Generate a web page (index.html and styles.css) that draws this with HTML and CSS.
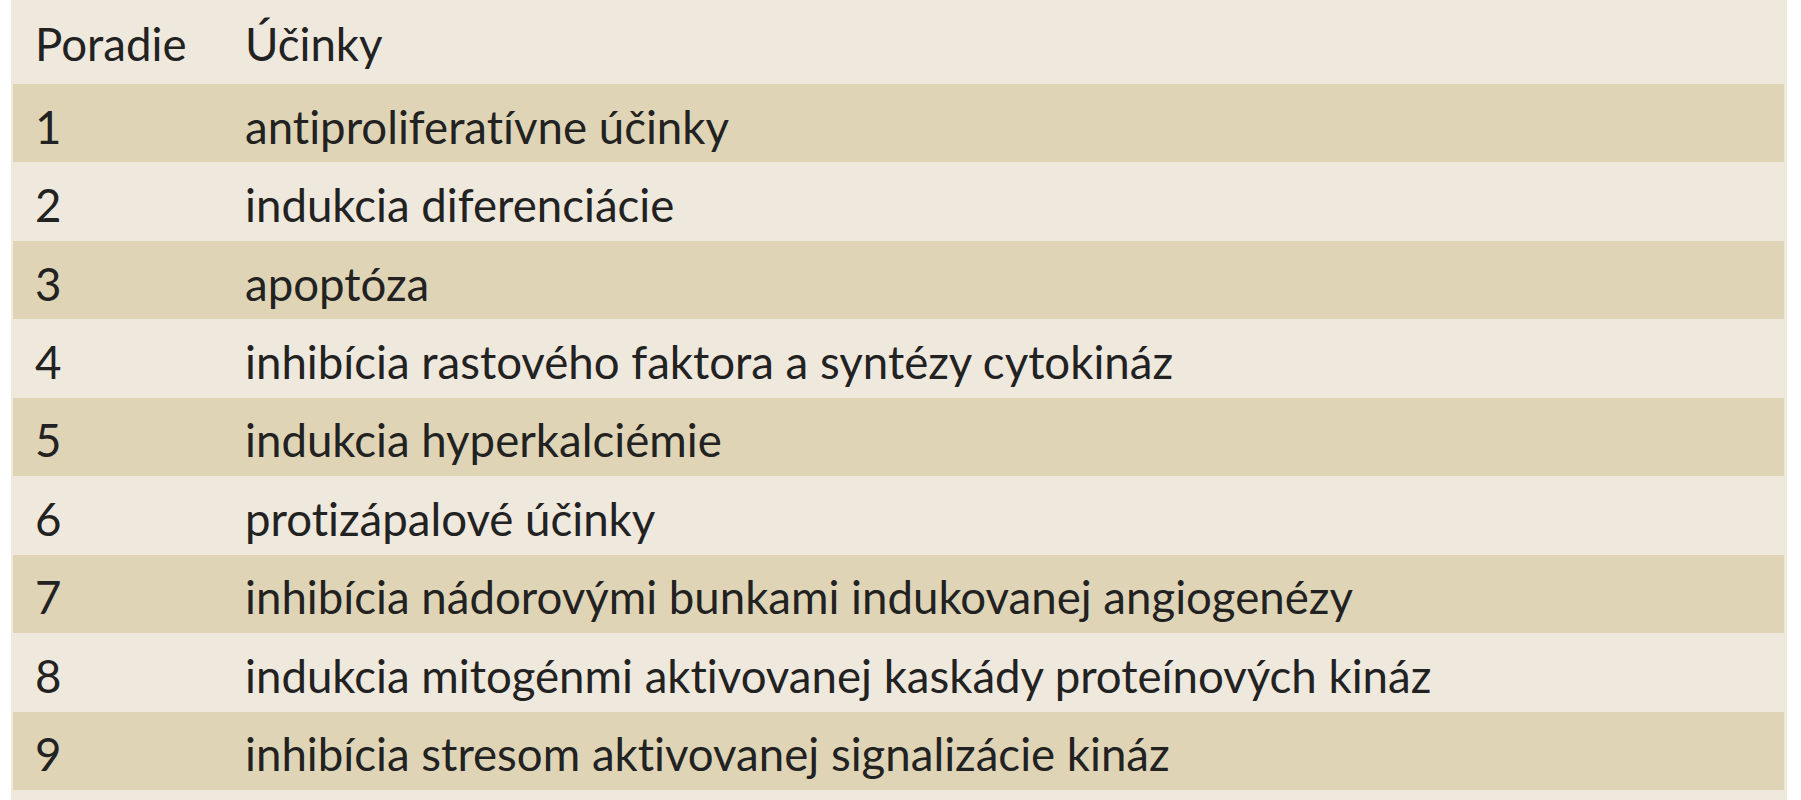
FILE: index.html
```html
<!DOCTYPE html>
<html lang="sk">
<head>
<meta charset="utf-8">
<title>Účinky</title>
<link rel="stylesheet" href="styles.css">
</head>
<body>
<div class="panel">
  <div class="row head"><div class="num">Poradie</div><div class="txt">Účinky</div></div>
  <div class="row alt"><div class="num">1</div><div class="txt">antiproliferatívne účinky</div></div>
  <div class="row"><div class="num">2</div><div class="txt">indukcia diferenciácie</div></div>
  <div class="row alt"><div class="num">3</div><div class="txt">apoptóza</div></div>
  <div class="row"><div class="num">4</div><div class="txt">inhibícia rastového faktora a syntézy cytokináz</div></div>
  <div class="row alt"><div class="num">5</div><div class="txt">indukcia hyperkalciémie</div></div>
  <div class="row"><div class="num">6</div><div class="txt">protizápalové účinky</div></div>
  <div class="row alt"><div class="num">7</div><div class="txt">inhibícia nádorovými bunkami indukovanej angiogenézy</div></div>
  <div class="row"><div class="num">8</div><div class="txt">indukcia mitogénmi aktivovanej kaskády proteínových kináz</div></div>
  <div class="row alt"><div class="num">9</div><div class="txt">inhibícia stresom aktivovanej signalizácie kináz</div></div>
</div>
</body>
</html>
```
FILE: styles.css
```css
html, body {
  margin: 0;
  padding: 0;
  background: #ffffff;
}
.panel {
  margin-left: 11px;
  width: 1776px;
  height: 800px;
  box-sizing: border-box;
  padding: 0 3px 10px 2px;
  background: #efe8dc;
  display: flex;
  flex-direction: column;
  font-family: Lato, "Noto Sans", sans-serif;
  font-size: 45.6px;
  font-variant-ligatures: none;
  color: #222222;
}
.row {
  display: grid;
  grid-template-columns: 210px 1fr;
  align-items: center;
  height: 78.5px;
  box-sizing: border-box;
  padding-left: 22px;
  padding-top: 6px;
}
.row.head {
  height: 84px;
  padding-top: 4px;
}
.row.alt {
  background: #dfd5b6;
}
```
